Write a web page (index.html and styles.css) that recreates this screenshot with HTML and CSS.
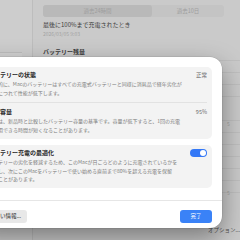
FILE: index.html
```html
<!DOCTYPE html>
<html>
<head>
    <title>バッテリー</title>
    <meta charset="UTF-8">
    <link rel="stylesheet" href="styles.css">
</head>
<body>
    <div class="window">
        <aside class="sidebar">
            <div class="side-item"></div>
        </aside>
        <main class="main">
            <div class="segmented">
                <span class="seg active">過去24時間</span>
                <span class="seg">過去10日</span>
            </div>
            <p class="stat-title">最後に100%まで充電されたとき</p>
            <p class="stat-date">2026/03/05 9:03</p>
            <h2 class="section">バッテリー残量</h2>

            <div class="chart level">
                <div class="plot">
                    <span class="bar" style="height:33px"></span>
                </div>
                <div class="axis"></div>
            </div>

            <div class="chart usage">
                <div class="plot"></div>
                <div class="axis">
                    <span>5</span>
                    <span>5</span>
                </div>
            </div>

            <div class="options">オプション...</div>
        </main>
    </div>

    <!-- バッテリーの状態シート -->
    <div class="sheet">
        <div class="group">
            <div class="row">
                <div class="row-text">
                    <h3>バッテリーの状態</h3>
                    <p class="desc">一般的に、Macのバッテリーはすべての充電式バッテリーと同様に消耗品で経年劣化が<br>進むにつれて性能が低下します。</p>
                </div>
                <span class="value">正常</span>
            </div>
            <div class="row">
                <div class="row-text">
                    <h3>最大容量</h3>
                    <p class="desc">これは、新品時と比較したバッテリー容量の基準です。容量が低下すると、1回の充電<br>で使用できる時間が短くなることがあります。</p>
                </div>
                <span class="value">95%</span>
            </div>
        </div>

        <div class="group">
            <div class="row">
                <div class="row-text">
                    <h3>バッテリー充電の最適化</h3>
                    <p class="desc">バッテリーの劣化を軽減するため、このMacが日ごろどのように充電されているかを<br>学習し、次にこのMacをバッテリーで使い始める直前まで80%を超える充電を保留<br>することがあります。</p>
                </div>
                <span class="toggle"><span class="knob"></span></span>
            </div>
        </div>

        <div class="footer">
            <span class="btn">詳しい情報...</span>
            <span class="btn primary">完了</span>
        </div>
    </div>
</body>
</html>
```

FILE: styles.css
```css
body {
    margin: 0;
    width: 240px;
    height: 240px;
    overflow: hidden;
    position: relative;
    background: #cacaca;
    font-family: "Noto Sans CJK JP", "Noto Sans", sans-serif;
}
p, h2, h3 {
    margin: 0;
}
.window {
    display: grid;
    grid-template-columns: 33px 1fr;
    height: 240px;
}
.sidebar {
    background: #cdcdcd;
    border-right: 1px solid #bdbdbd;
    padding-top: 52px;
}
.side-item {
    height: 6px;
    margin-right: 10px;
    border-top: 1px solid #bdbdbd;
    background: #d2d2d2;
}
.main {
    padding: 5px 0 0 10px;
    min-width: 0;
}
.segmented {
    display: flex;
    width: 181px;
    height: 12px;
    background: #c4c4c4;
    border-radius: 3px;
    font-size: 5.5px;
    color: #9d9d9d;
}
.seg {
    flex: 1;
    display: flex;
    align-items: center;
    justify-content: center;
}
.seg.active {
    flex: 0 0 109px;
    background: #b9b9b9;
    border-radius: 3px;
}
.stat-title {
    margin-top: 4px;
    font-size: 6px;
    line-height: 8px;
    color: #3a3a3a;
}
.stat-date {
    font-size: 5px;
    line-height: 9px;
    color: #a3a3a3;
}
.section {
    margin-top: 10px;
    font-size: 6px;
    line-height: 8px;
    font-weight: bold;
    color: #3a3a3a;
}
.chart {
    display: flex;
    background: repeating-linear-gradient(to bottom, #bfbfbf 0 1px, transparent 1px 12px);
}
.chart.level {
    margin-top: 4px;
    height: 48px;
}
.chart.usage {
    margin-top: 12px;
    height: 76px;
}
.plot {
    flex: 1;
    display: flex;
    justify-content: flex-end;
    align-items: flex-end;
    padding-bottom: 1px;
}
.bar {
    width: 5px;
    background: #8fb78f;
}
.axis {
    width: 13px;
    display: flex;
    flex-direction: column;
    justify-content: space-between;
    padding-left: 5px;
    font-size: 5px;
    color: #a0a0a0;
}
.options {
    margin: 30px 0 0 165px;
    font-size: 5.5px;
    line-height: 8px;
    color: #4f4f4f;
    white-space: nowrap;
}
.sheet {
    position: absolute;
    left: -27px;
    top: 57px;
    width: 249px;
    height: 171px;
    box-sizing: border-box;
    padding: 10px 10px 0;
    background: #ffffff;
    border-radius: 12px;
    box-shadow: 0 10px 26px rgba(0,0,0,0.4), 0 0 0 0.5px rgba(0,0,0,0.12);
    display: flex;
    flex-direction: column;
}
.group {
    background: #f3f3f3;
    border-radius: 5px;
    padding: 0 5px;
}
.group + .group {
    margin-top: 6.5px;
}
.row {
    display: flex;
    justify-content: space-between;
    align-items: flex-start;
    padding: 4px 0 4.5px;
}
.row + .row {
    border-top: 1px solid #e2e2e2;
    padding-top: 5.5px;
}
.row-text h3 {
    font-size: 6px;
    line-height: 8px;
    font-weight: bold;
    color: #262626;
}
.desc {
    margin-top: 1px;
    font-size: 5px;
    line-height: 8.5px;
    color: #7b7b7b;
    white-space: nowrap;
}
.value {
    font-size: 5.5px;
    line-height: 8px;
    color: #6a6a6a;
}
.toggle {
    display: flex;
    justify-content: flex-end;
    align-items: center;
    width: 17.5px;
    height: 8px;
    padding: 0 0.75px;
    box-sizing: border-box;
    border-radius: 4px;
    background: #3478f6;
}
.knob {
    width: 6.5px;
    height: 6.5px;
    border-radius: 50%;
    background: #ffffff;
}
.footer {
    display: flex;
    justify-content: space-between;
    margin: 12px -10px 0;
    padding: 9px 10px;
    border-top: 1px solid #e6e6e6;
}
.btn {
    display: flex;
    align-items: center;
    height: 12.5px;
    padding: 0 6px;
    border-radius: 3px;
    background: #e8e8e8;
    font-size: 5.5px;
    color: #2b2b2b;
}
.btn.primary {
    width: 32px;
    padding: 0;
    justify-content: center;
    background: #3a82f7;
    color: #ffffff;
}
```
